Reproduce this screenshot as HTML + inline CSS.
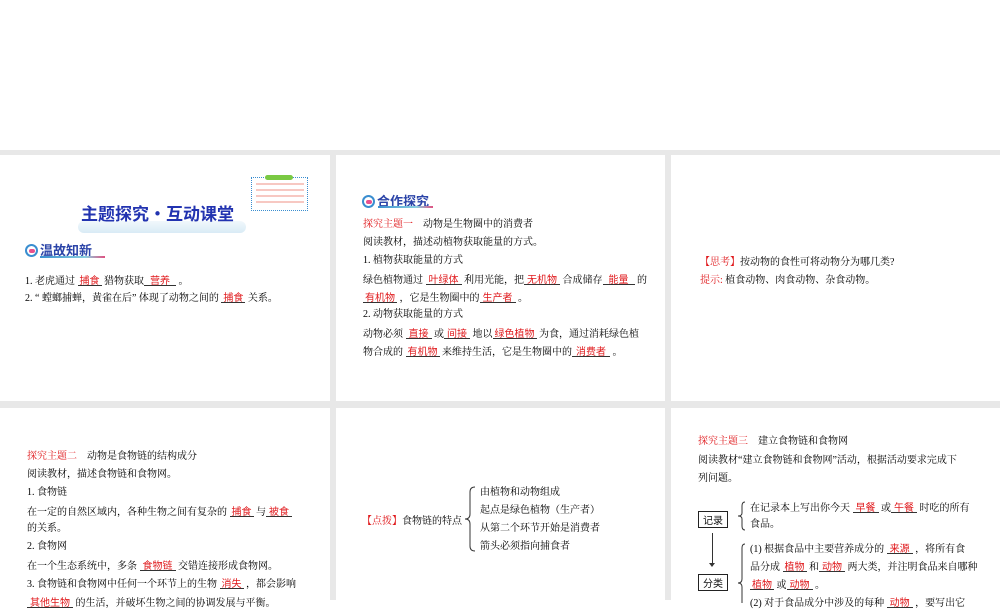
<!DOCTYPE html>
<html><head><meta charset="utf-8">
<style>
*{margin:0;padding:0;box-sizing:border-box}
body{width:1000px;height:600px;position:relative;overflow:hidden;background:#fff;font-family:"Liberation Serif","Noto Serif CJK SC","Noto Sans CJK SC",serif;font-size:10px;color:#111}
.g{position:absolute;background:#e8e8e8}
.l{position:absolute;white-space:nowrap;line-height:12px;font-size:10px;color:#000}
.b{display:inline-block;border-bottom:1px solid #333;color:#e0191c;text-align:center;line-height:11px;font-family:"Noto Sans CJK SC",sans-serif}
.r{color:#e0191c}
.hd{position:absolute;font-family:"Noto Sans CJK SC",sans-serif;font-size:13px;color:#2b44a8;font-weight:bold;white-space:nowrap}
.ic{display:inline-block;width:13px;height:13px;border:2px solid #3a8ed0;border-radius:50%;vertical-align:-2px;margin-right:2px;position:relative}
.ic:after{content:"";position:absolute;left:2px;top:3px;width:6px;height:4px;background:#e8508e;border-radius:2px}
.ul{position:absolute;height:2px;background:linear-gradient(90deg,#3a8ed0,#8ad0e0 70%,#e05080)}
.box{position:absolute;border:1px solid #222;font-size:10px;text-align:center;line-height:15px;font-family:"Noto Sans CJK SC",sans-serif}
</style></head><body>
<div class="g" style="left:0;top:150px;width:1000px;height:5px"></div>
<div class="g" style="left:0;top:401px;width:1000px;height:7px"></div>
<div class="g" style="left:330px;top:150px;width:6px;height:450px"></div>
<div class="g" style="left:665px;top:150px;width:6px;height:450px"></div>

<!-- slide 1 -->
<div style="position:absolute;left:78px;top:221px;width:168px;height:12px;background:linear-gradient(180deg,#eef6fb,#cfe6f3);border-radius:6px;opacity:.8"></div>
<div class="hd" style="left:81px;top:200px;font-size:17px;color:#2233b0">主题探究·互动课堂</div>
<div style="position:absolute;left:251px;top:177px;width:57px;height:34px;border:1px dotted #3a8ed0"></div>
<div style="position:absolute;left:265px;top:175px;width:28px;height:5px;background:#7ac943;border-radius:3px"></div>
<div style="position:absolute;left:256px;top:183px;width:48px;height:24px;background:repeating-linear-gradient(180deg,#f4b0a8 0 2px,transparent 2px 6px);opacity:.7"></div>
<div class="hd" style="left:25px;top:240px"><span class="ic"></span>温故知新</div>
<div class="ul" style="left:40px;top:256px;width:65px"></div>
<div class="l" style="left:25px;top:274px">1. 老虎通过 <span class="b" style="width:24px">捕食</span> 猎物获取<span class="b" style="width:32px">营养</span> 。</div>
<div class="l" style="left:25px;top:291px">2. “ 螳螂捕蝉，黄雀在后” 体现了动物之间的 <span class="b" style="width:24px">捕食</span> 关系。</div>

<!-- slide 2 -->
<div class="hd" style="left:362px;top:191px"><span class="ic"></span>合作探究</div>
<div class="ul" style="left:378px;top:206px;width:55px"></div>
<div class="l" style="left:363px;top:219px"><span class="r">探究主题一</span>　动物是生物圈中的消费者</div>
<div class="l" style="left:363px;top:237px">阅读教材，描述动植物获取能量的方式。</div>
<div class="l" style="left:363px;top:255px">1. 植物获取能量的方式</div>
<div class="l" style="left:363px;top:273px">绿色植物通过 <span class="b" style="width:36px">叶绿体</span> 利用光能，把<span class="b" style="width:36px">无机物</span> 合成储存<span class="b" style="width:32px">能量</span> 的</div>
<div class="l" style="left:363px;top:291px"><span class="b" style="width:34px">有机物</span> ，它是生物圈中的<span class="b" style="width:36px">生产者</span> 。</div>
<div class="l" style="left:363px;top:309px">2. 动物获取能量的方式</div>
<div class="l" style="left:363px;top:327px">动物必须 <span class="b" style="width:26px">直接</span> 或<span class="b" style="width:26px">间接</span> 地以<span class="b" style="width:44px">绿色植物</span> 为食，通过消耗绿色植</div>
<div class="l" style="left:363px;top:345px">物合成的 <span class="b" style="width:34px">有机物</span> 来维持生活，它是生物圈中的<span class="b" style="width:38px">消费者</span> 。</div>

<!-- slide 3 -->
<div class="l" style="left:700px;top:257px"><span class="r">【思考】</span>按动物的食性可将动物分为哪几类?</div>
<div class="l" style="left:700px;top:275px"><span class="r">提示:</span> 植食动物、肉食动物、杂食动物。</div>

<!-- slide 4 -->
<div class="l" style="left:27px;top:451px"><span class="r">探究主题二</span>　动物是食物链的结构成分</div>
<div class="l" style="left:27px;top:469px">阅读教材，描述食物链和食物网。</div>
<div class="l" style="left:27px;top:487px">1. 食物链</div>
<div class="l" style="left:27px;top:505px">在一定的自然区域内，各种生物之间有复杂的 <span class="b" style="width:24px">捕食</span> 与<span class="b" style="width:26px">被食</span></div>
<div class="l" style="left:27px;top:523px">的关系。</div>
<div class="l" style="left:27px;top:541px">2. 食物网</div>
<div class="l" style="left:27px;top:559px">在一个生态系统中，多条 <span class="b" style="width:36px">食物链</span> 交错连接形成食物网。</div>
<div class="l" style="left:27px;top:577px">3. 食物链和食物网中任何一个环节上的生物 <span class="b" style="width:24px">消失</span> ，都会影响</div>
<div class="l" style="left:27px;top:596px"><span class="b" style="width:46px">其他生物</span> 的生活，并破坏生物之间的协调发展与平衡。</div>

<!-- slide 5 -->
<div class="l" style="left:362px;top:516px"><span class="r">【点拨】</span>食物链的特点</div>
<svg style="position:absolute;left:464px;top:486px" width="14" height="66"><path d="M11 1 Q6 1 6 6 V28 Q6 33 1 33 Q6 33 6 38 V60 Q6 65 11 65" fill="none" stroke="#333" stroke-width="1"/></svg>
<div class="l" style="left:480px;top:487px">由植物和动物组成</div>
<div class="l" style="left:480px;top:505px">起点是绿色植物（生产者）</div>
<div class="l" style="left:480px;top:523px">从第二个环节开始是消费者</div>
<div class="l" style="left:480px;top:541px">箭头必须指向捕食者</div>

<!-- slide 6 -->
<div class="l" style="left:698px;top:436px"><span class="r">探究主题三</span>　建立食物链和食物网</div>
<div class="l" style="left:698px;top:455px">阅读教材“建立食物链和食物网”活动，根据活动要求完成下</div>
<div class="l" style="left:698px;top:473px">列问题。</div>
<div class="box" style="left:698px;top:511px;width:30px;height:17px">记录</div>
<div style="position:absolute;left:712px;top:533px;width:1px;height:32px;background:#333"></div>
<div style="position:absolute;left:709px;top:563px;border-left:3px solid transparent;border-right:3px solid transparent;border-top:4px solid #333"></div>
<div class="box" style="left:698px;top:574px;width:30px;height:17px">分类</div>
<svg style="position:absolute;left:737px;top:501px" width="10" height="30"><path d="M8 1 Q5 1 5 5 V12 Q5 15 1 15 Q5 15 5 18 V25 Q5 29 8 29" fill="none" stroke="#333"/></svg>
<svg style="position:absolute;left:737px;top:543px" width="10" height="60"><path d="M8 1 Q5 1 5 5 V36 Q5 40 1 40 Q5 40 5 44 V60" fill="none" stroke="#333"/></svg>
<div class="l" style="left:750px;top:501px">在记录本上写出你今天 <span class="b" style="width:26px">早餐</span> 或<span class="b" style="width:26px">午餐</span> 时吃的所有</div>
<div class="l" style="left:750px;top:519px">食品。</div>
<div class="l" style="left:750px;top:542px">(1) 根据食品中主要营养成分的 <span class="b" style="width:26px">来源</span> ，将所有食</div>
<div class="l" style="left:750px;top:560px">品分成 <span class="b" style="width:24px">植物</span> 和<span class="b" style="width:26px">动物</span> 两大类，并注明食品来自哪种</div>
<div class="l" style="left:750px;top:578px"><span class="b" style="width:24px">植物</span> 或<span class="b" style="width:26px">动物</span> 。</div>
<div class="l" style="left:750px;top:596px">(2) 对于食品成分中涉及的每种 <span class="b" style="width:26px">动物</span> ，要写出它</div>
</body></html>
